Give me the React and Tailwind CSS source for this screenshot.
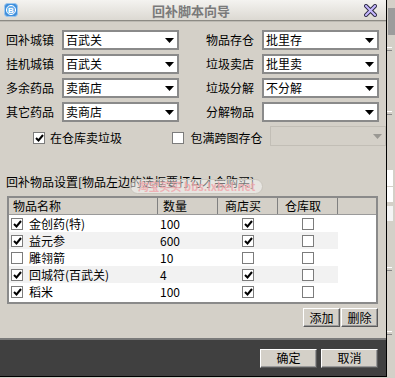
import React from "react";

const font = "font-['Noto_Sans_CJK_SC','Noto_Sans',sans-serif]";

function Arrow({ disabled }) {
    return (
        <svg width="9" height="5" viewBox="0 0 9 5" className="mr-[3px] shrink-0">
            <path d="M0 0 H9 L4.5 5 Z" fill={disabled ? "#9a9893" : "#000"} />
        </svg>
    );
}

function Select({ value, disabled }) {
    return (
        <div
            className={
                disabled
                    ? "flex h-[20px] w-[117px] items-center border border-[#c2beb6] bg-[#d4d0c8]"
                    : "flex h-[20px] w-[117px] items-center border-2 border-[#8a8a8a] bg-white"
            }
        >
            <span className="flex-1 pl-[2px] text-[12px] leading-none">{value}</span>
            <Arrow disabled={disabled} />
        </div>
    );
}

function Check({ checked }) {
    return (
        <div className="flex h-[12px] w-[12px] shrink-0 items-center justify-center border border-[#7c7c7c] bg-white">
            {checked && (
                <svg width="9" height="8" viewBox="0 0 9 8">
                    <path d="M1 4 L3.5 6.5 L8 1" fill="none" stroke="#000" strokeWidth="2" />
                </svg>
            )}
        </div>
    );
}

function Btn({ children, w }) {
    return (
        <div
            className={`flex h-[19px] ${w} items-center justify-center border border-t-white border-l-white border-r-[#5a5a5a] border-b-[#5a5a5a] bg-[#d4d0c8] text-[12px] leading-none shadow-[inset_-1px_-1px_0_#9a9a9a]`}
        >
            {children}
        </div>
    );
}

const formRows = [
    ["回补城镇", "百武关", "物品存仓", "批里存"],
    ["挂机城镇", "百武关", "垃圾卖店", "批里卖"],
    ["多余药品", "卖商店", "垃圾分解", "不分解"],
    ["其它药品", "卖商店", "分解物品", ""],
];

const items = [
    { name: "金创药(特)", qty: "100", on: true, buy: true },
    { name: "益元参", qty: "600", on: true, buy: true },
    { name: "雕翎箭", qty: "10", on: false, buy: false },
    { name: "回城符(百武关)", qty: "4", on: true, buy: true },
    { name: "稻米", qty: "100", on: true, buy: true },
];

export default function App() {
    return (
        <div className={`flex h-[378px] w-[395px] overflow-hidden bg-[#d4d0c8] text-black ${font}`}>
            {/* dialog */}
            <div className="flex h-[377px] w-[387px] shrink-0 flex-col border-r border-b border-black">
                {/* title bar */}
                <div className="relative flex h-[20px] shrink-0 items-center bg-gradient-to-b from-[#f4f3f0] to-[#dcd9d2]">
                    <svg width="14" height="14" viewBox="0 0 14 14" className="ml-[4px]">
                        <rect x="0.5" y="0.5" width="13" height="13" rx="3" fill="#3f8fdc" stroke="#9cc7ee" />
                        <circle cx="7" cy="7" r="4.6" fill="#6fb3ee" stroke="#fff" strokeWidth="1" />
                        <text x="7" y="10" textAnchor="middle" fontSize="8" fontWeight="bold" fill="#fff" fontFamily="Liberation Sans, sans-serif">B</text>
                    </svg>
                    <div className="flex-1 text-center text-[13px] font-bold leading-none text-[#7a7a7a]">回补脚本向导</div>
                    <svg width="13" height="13" viewBox="0 0 13 13" className="mr-[9px]">
                        <path d="M2 2 L11 11 M11 2 L2 11" stroke="#2c2a40" strokeWidth="4" strokeLinecap="square" />
                        <path d="M2 2 L11 11 M11 2 L2 11" stroke="#c6b8ff" strokeWidth="2" strokeLinecap="square" />
                    </svg>
                </div>
                <div className="h-[1px] shrink-0 bg-[#8c8a84]" />
                <div className="h-[1px] shrink-0 bg-[#bcb9b2]" />

                {/* body */}
                <div className="flex flex-1 flex-col pt-[8px]">
                    <div className="flex flex-col gap-[4px]">
                        {formRows.map(([l1, v1, l2, v2]) => (
                            <div key={l1} className="flex h-[20px] items-center">
                                <div className="w-[62px] pl-[6px] text-[12px] leading-none">{l1}</div>
                                <Select value={v1} />
                                <div className="w-[83px] pr-[8px] text-right text-[12px] leading-none">{l2}</div>
                                <Select value={v2} />
                            </div>
                        ))}
                        <div className="flex h-[20px] items-center">
                            <div className="ml-[33px] mt-[3px]">
                                <Check checked />
                            </div>
                            <div className="ml-[5px] mt-[3px] w-[124px] text-[12px] leading-none">在仓库卖垃圾</div>
                            <div className="mt-[3px]">
                                <Check />
                            </div>
                            <div className="ml-[6px] mt-[3px] w-[81px] text-[12px] leading-none">包满跨图存仓</div>
                            <Select value="" disabled />
                        </div>
                    </div>

                    <div className="relative mt-[30px] pl-[6px] text-[12px] leading-none">
                        回补物品设置[物品左边的选框要打勾才会购买]
                        <div className="absolute left-[130px] top-[3px] flex h-[15px] w-[133px] items-center justify-center rounded-full border border-[#c9c5bd] bg-white/45 text-[11px] font-bold leading-none text-[#f0a3a8]/80">
                            淘宝买买 bbs.lxbel.net
                        </div>
                    </div>

                    {/* table */}
                    <div className="ml-[7px] mt-[8px] h-[108px] w-[371px] border-2 border-[#8a8a8a] bg-white">
                        <div className="flex h-[17px] border-b border-[#9a9a9a] bg-[#d4d0c8] text-[12px] leading-none">
                            <div className="flex w-[149px] items-center border-r border-[#808080] pl-[4px]">物品名称</div>
                            <div className="flex w-[60px] items-center border-r border-[#808080] pl-[5px]">数量</div>
                            <div className="flex w-[60px] items-center border-r border-[#808080] pl-[7px]">商店买</div>
                            <div className="flex w-[60px] items-center border-r border-[#808080] pl-[7px]">仓库取</div>
                            <div className="flex-1" />
                        </div>
                        {items.map((it, i) => (
                            <div key={it.name} className="flex h-[17px] text-[12px] leading-none">
                                <div className={`flex w-[329px] items-center ${i % 2 === 1 ? "bg-[#f2f2f2]" : "bg-white"}`}>
                                    <div className="flex w-[151px] items-center pl-[2px]">
                                        <Check checked={it.on} />
                                        <span className="ml-[6px]">{it.name}</span>
                                    </div>
                                    <div className="w-[82px] pl-[0px]">{it.qty}</div>
                                    <div className="w-[60px]">
                                        <Check checked={it.buy} />
                                    </div>
                                    <Check />
                                </div>
                            </div>
                        ))}
                    </div>

                    <div className="mt-[4px] flex justify-end gap-[1px] pr-[8px]">
                        <Btn w="w-[37px]">添加</Btn>
                        <Btn w="w-[37px]">删除</Btn>
                    </div>
                </div>

                {/* footer */}
                <div className="h-[2px] shrink-0 bg-[#7a7a7a]" />
                <div className="flex h-[36px] shrink-0 items-center justify-end gap-[4px] bg-[#404040] pr-[8px]">
                    <Btn w="w-[57px]">确定</Btn>
                    <Btn w="w-[57px]">取消</Btn>
                </div>
            </div>

            {/* page behind */}
            <div className="flex flex-1 flex-col bg-[#d4d0c8]">
                <div className="mt-[8px] h-[27px] w-[7px] self-end bg-[#9c9c9c]" />
                <div className="mt-[12px] h-[1px] w-[5px] bg-[#ffffff]" />
                <div className="mt-[2px] h-[1px] w-[5px] bg-[#888]" />
                <div className="mt-[60px] h-[1px] w-[5px] bg-[#ffffff]" />
                <div className="mt-[2px] h-[1px] w-[5px] bg-[#888]" />
                <div className="mt-[55px] h-[16px] w-[6px] bg-white" />
                <div className="mt-[1px] h-[15px] w-[6px] bg-white" />
                <div className="mt-[4px] h-[15px] w-[6px] bg-[#f4f4f4]" />
                <div className="mt-[46px] h-[1px] w-[5px] bg-[#ffffff]" />
                <div className="mt-[2px] h-[1px] w-[5px] bg-[#888]" />
                <div className="mt-[60px] h-[1px] w-[5px] bg-[#ffffff]" />
                <div className="mt-[2px] h-[1px] w-[5px] bg-[#888]" />
            </div>
        </div>
    );
}
